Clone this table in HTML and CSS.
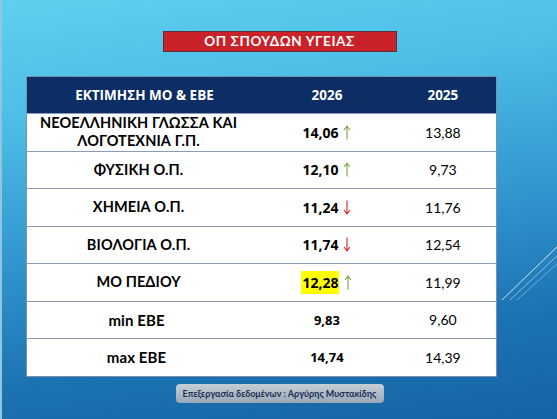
FILE: index.html
```html
<!DOCTYPE html>
<html lang="el">
<head>
    <meta charset="UTF-8">
    <meta name="viewport" content="width=device-width, initial-scale=1.0">
    <link rel="stylesheet" href="styles.css">
    <title>ΟΠ Σπουδών Υγείας</title>
</head>
<body>
    <div class="slide">
        <svg class="deco" width="557" height="419" viewBox="0 0 557 419">
            <line x1="500" y1="300" x2="557" y2="245" stroke="#ffffff" stroke-opacity="0.8" stroke-width="1"/>
            <line x1="508" y1="300" x2="557" y2="254" stroke="#ffffff" stroke-opacity="0.5" stroke-width="1"/>
            <line x1="515" y1="300" x2="557" y2="262" stroke="#ffffff" stroke-opacity="0.35" stroke-width="1"/>
            <line x1="380" y1="358" x2="402" y2="336" stroke="#ffffff" stroke-opacity="0.5" stroke-width="1"/>
        </svg>

        <div class="title">ΟΠ ΣΠΟΥΔΩΝ ΥΓΕΙΑΣ</div>

        <table class="scores">
            <thead>
                <tr>
                    <th class="c1">ΕΚΤΙΜΗΣΗ ΜΟ &amp; ΕΒΕ</th>
                    <th class="c2">2026</th>
                    <th class="c3">2025</th>
                </tr>
            </thead>
            <tbody>
                <tr>
                    <td class="label">ΝΕΟΕΛΛΗΝΙΚΗ ΓΛΩΣΣΑ ΚΑΙ<br>ΛΟΓΟΤΕΧΝΙΑ Γ.Π.</td>
                    <td class="now">14,06<svg class="arrow up" width="8" height="15" viewBox="0 0 8 15"><path d="M4 14.5V1.5M1 5L4 1.2L7 5"/></svg></td>
                    <td class="prev">13,88</td>
                </tr>
                <tr>
                    <td class="label">ΦΥΣΙΚΗ Ο.Π.</td>
                    <td class="now">12,10<svg class="arrow up" width="8" height="15" viewBox="0 0 8 15"><path d="M4 14.5V1.5M1 5L4 1.2L7 5"/></svg></td>
                    <td class="prev">9,73</td>
                </tr>
                <tr>
                    <td class="label">ΧΗΜΕΙΑ Ο.Π.</td>
                    <td class="now">11,24<svg class="arrow down" width="8" height="15" viewBox="0 0 8 15"><path d="M4 0.5V13.5M1 10L4 13.8L7 10"/></svg></td>
                    <td class="prev">11,76</td>
                </tr>
                <tr>
                    <td class="label">ΒΙΟΛΟΓΙΑ Ο.Π.</td>
                    <td class="now">11,74<svg class="arrow down" width="8" height="15" viewBox="0 0 8 15"><path d="M4 0.5V13.5M1 10L4 13.8L7 10"/></svg></td>
                    <td class="prev">12,54</td>
                </tr>
                <tr>
                    <td class="label">ΜΟ ΠΕΔΙΟΥ</td>
                    <td class="now"><span class="mark">12,28</span><svg class="arrow up" width="8" height="15" viewBox="0 0 8 15"><path d="M4 14.5V1.5M1 5L4 1.2L7 5"/></svg></td>
                    <td class="prev">11,99</td>
                </tr>
                <tr>
                    <td class="label small">min EBE</td>
                    <td class="now plain">9,83</td>
                    <td class="prev">9,60</td>
                </tr>
                <tr>
                    <td class="label small">max EBE</td>
                    <td class="now plain">14,74</td>
                    <td class="prev">14,39</td>
                </tr>
            </tbody>
        </table>

        <div class="credit">Επεξεργασία δεδομένων : Αργύρης Μυστακίδης</div>
    </div>
</body>
</html>
```

FILE: styles.css
```css
* {
    margin: 0;
    padding: 0;
    box-sizing: border-box;
}

body {
    width: 557px;
    height: 419px;
    overflow: hidden;
    font-family: "Open Sans", "Liberation Sans", sans-serif;
}

.slide {
    position: relative;
    width: 557px;
    height: 419px;
    padding-top: 31px;
    display: flex;
    flex-direction: column;
    align-items: center;
    background: linear-gradient(172deg, #5fd0ef 0%, #4cbde6 25%, #2f93cc 55%, #1c73b1 78%, #1663a4 100%);
    border-left: 2px solid #8fc6e2;
}

.deco {
    position: absolute;
    top: 0;
    left: 0;
}

.title {
    width: 234px;
    height: 21px;
    background-color: #c92229;
    border: 1px solid #5c3038;
    color: #ffffff;
    font-family: "Lato", "Liberation Sans", sans-serif;
    font-weight: 700;
    font-size: 13.5px;
    letter-spacing: 0.6px;
    line-height: 19px;
    text-align: center;
}

.scores {
    position: relative;
    align-self: flex-start;
    margin-top: 24px;
    margin-left: 24px;
    width: 471px;
    border-collapse: collapse;
    background-color: #ffffff;
    border: 1px solid #7d8fab;
}

.scores th {
    height: 37px;
    background-color: #0c2e64;
    color: #ffffff;
    font-family: "Open Sans", "Liberation Sans", sans-serif;
    font-weight: 700;
    font-size: 13.5px;
    text-align: center;
}

.scores .c1 { width: 238px; padding-right: 2px; }
.scores .c2 { width: 126px; }
.scores .c3 { width: 107px; }

.scores td {
    height: 37.5px;
    border-top: 1.5px solid #8c9bb8;
    text-align: center;
    color: #000000;
}

.label {
    font-family: "Lato", "Liberation Sans", sans-serif;
    font-weight: 700;
    font-size: 14.5px;
    line-height: 18px;
    padding-right: 14px;
    letter-spacing: 0.1px;
}

.label.small {
    font-size: 15px;
    padding-right: 18px;
}

.now {
    font-family: "Open Sans", "Liberation Sans", sans-serif;
    font-weight: 700;
    font-size: 14px;
}

.now.plain {
    font-size: 13px;
}

.prev {
    font-family: "Lato", "Liberation Sans", sans-serif;
    font-weight: 400;
    font-size: 14px;
}

.arrow {
    margin-left: 5px;
    vertical-align: -2px;
    fill: none;
    stroke-width: 1.1;
}

.arrow.up {
    stroke: #87a046;
}

.arrow.down {
    stroke: #d8232a;
}

.mark {
    background-color: #ffff00;
    padding: 2px 1px;
}

.credit {
    margin-top: 7px;
    width: 208px;
    height: 19px;
    border-radius: 4px;
    background: linear-gradient(to bottom, #c5ced6 0%, #9aa8b6 100%);
    color: #1b2c55;
    font-family: "Lato", "Liberation Sans", sans-serif;
    font-weight: 700;
    font-size: 9px;
    line-height: 19px;
    text-align: center;
}
```
